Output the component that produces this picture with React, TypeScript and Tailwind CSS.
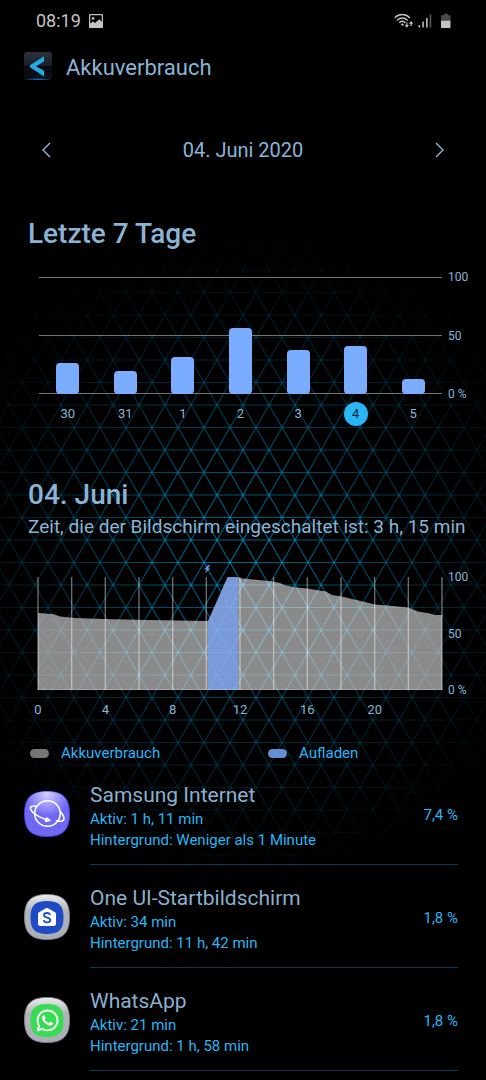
import { type ReactNode, useId } from 'react';
import { FaWhatsapp } from 'react-icons/fa';

const days = [
  { label: '30', level: 31 },
  { label: '31', level: 23 },
  { label: '1', level: 37 },
  { label: '2', level: 66 },
  { label: '3', level: 44 },
  { label: '4', level: 48, selected: true },
  { label: '5', level: 15 },
];

const hours = ['0', '4', '8', '12', '16', '20'];

// Triangular mesh: sides of 26, rows 22.5 apart, first row of nodes at y = -3.
const meshRows = Array.from({ length: 30 }, (_, row) => ({ y: -3 + row * 22.5, x: row % 2 ? 5 : 18 }));
const meshLines = [
  ...meshRows.map(({ y }) => `M0 ${y}H660`),
  ...Array.from({ length: 42 }, (_, i) => {
    const x = 18 + (i - 16) * 26;
    return `M${x} -3l390 675M${x + 390} -3l-390 675`;
  }),
].join('');
const meshNodes = meshRows.flatMap(({ x, y }) =>
  Array.from({ length: 26 }, (_, i) => ({ x: x + i * 26, y })),
);

function Backdrop() {
  return (
    <svg
      className="pointer-events-none absolute top-[228px] left-1/2 h-[660px] w-[660px] -translate-x-1/2"
      viewBox="0 0 660 660"
      aria-hidden="true"
    >
      <defs>
        <radialGradient id="glow" gradientUnits="userSpaceOnUse" cx="330" cy="330" r="330">
          <stop offset="0" stopColor="#fff" stopOpacity="0.9" />
          <stop offset="0.3" stopColor="#fff" stopOpacity="0.68" />
          <stop offset="0.6" stopColor="#fff" stopOpacity="0.36" />
          <stop offset="0.8" stopColor="#fff" stopOpacity="0.15" />
          <stop offset="1" stopColor="#fff" stopOpacity="0" />
        </radialGradient>
        <mask id="fade">
          <rect width="660" height="660" fill="url(#glow)" />
        </mask>
      </defs>
      <g mask="url(#fade)">
        <path d={meshLines} fill="none" stroke="#006e98" strokeWidth="1.2" />
        {meshNodes.map(({ x, y }) => (
          <circle key={`${x}-${y}`} cx={x} cy={y} r="1.4" fill="#008fc0" />
        ))}
      </g>
    </svg>
  );
}

function StatusBar() {
  return (
    <div className="flex h-10 items-center justify-between pt-px pr-[35px] pl-9 text-[#c4c4c4]">
      <div className="flex items-center gap-2">
        <span className="text-[18px] leading-6">08:19</span>
        <svg width="14" height="14" viewBox="0 0 14 14" aria-hidden="true">
          <path
            fillRule="evenodd"
            fill="currentColor"
            d="M1 0H13Q14 0 14 1V13Q14 14 13 14H1Q0 14 0 13V1Q0 0 1 0ZM1.2 1.2V9.6L4 7.4L6 9L10.4 5.2L12.8 8V1.2ZM4 3A1.4 1.4 0 1 1 4 5.8A1.4 1.4 0 1 1 4 3Z"
          />
        </svg>
      </div>
      <svg width="57" height="16" viewBox="0 0 57 16" aria-hidden="true">
        <g fill="none" stroke="currentColor" strokeWidth="1.4" strokeLinecap="round">
          <path d="M1.2 4.4A10 10 0 0 1 15.4 4.4" />
          <path d="M3.4 7A7 7 0 0 1 13.2 7" />
          <path d="M5.7 9.4A4 4 0 0 1 10.9 9.4" />
        </g>
        <circle cx="8.4" cy="11.6" r="1.2" fill="currentColor" />
        <path
          fill="currentColor"
          d="M12.2 9.5H13.4V12H14.9L12.8 14.7L10.7 12H12.2ZM16.5 13V10.7H15L17.1 8L19.2 10.7H17.7V13Z"
        />
        <path fill="currentColor" d="M24.5 12H26V14.5H24.5ZM28.3 8.5H29.8V14.5H28.3ZM32.1 5H33.6V14.5H32.1Z" />
        <path fill="#5c5c5c" d="M35.7 1.5H37.2V14.5H35.7Z" />
        <path fill="#4a4a4a" d="M50 0.8H54V2.2H56.5V8H47V2.2H50Z" />
        <path fill="currentColor" d="M47 7.7H56.5V14Q56.5 15 55.5 15H48Q47 15 47 14Z" />
      </svg>
    </div>
  );
}

function Header() {
  return (
    <header className="flex h-[54px] items-start gap-[14px] pt-3 pl-6">
      <button type="button" aria-label="Zurück" className="block">
        <svg width="28" height="28" viewBox="0 0 28 28" aria-hidden="true">
          <defs>
            <linearGradient id="back-bg" x2="0" y2="1">
              <stop offset="0" stopColor="#2c343f" />
              <stop offset="0.5" stopColor="#181d24" />
              <stop offset="0.51" stopColor="#07090c" />
              <stop offset="1" stopColor="#0b121c" />
            </linearGradient>
            <radialGradient id="back-glow" cx="0.5" cy="1" r="0.5" gradientTransform="translate(0 .85) scale(1 .15)">
              <stop offset="0" stopColor="#1480e0" />
              <stop offset="1" stopColor="#1480e0" stopOpacity="0" />
            </radialGradient>
          </defs>
          <rect width="28" height="28" rx="3" fill="url(#back-bg)" />
          <rect width="28" height="28" rx="3" fill="url(#back-glow)" />
          <path d="M20 4.2V9.4L12 14.2L20 18.8V24.4L6 15.2V13.2Z" fill="#27a8e6" />
        </svg>
      </button>
      <h1 className="pt-0.5 text-[22px] leading-7">Akkuverbrauch</h1>
    </header>
  );
}

function Chevron({ d }: { d: string }) {
  return (
    <svg width="10" height="16" viewBox="0 0 10 16" fill="none" stroke="#8cc0e8" strokeWidth="1.3" aria-hidden="true">
      <path d={d} />
    </svg>
  );
}

function DateSwitcher() {
  return (
    <nav className="flex h-28 items-center justify-between px-[42px]">
      <button type="button" aria-label="Vorheriger Tag">
        <Chevron d="M8 1L1 8L8 15" />
      </button>
      <span className="text-[20px] leading-7">04. Juni 2020</span>
      <button type="button" aria-label="Nächster Tag">
        <Chevron d="M2 1L9 8L2 15" />
      </button>
    </nav>
  );
}

function Scale() {
  return (
    <div className="-my-2 flex w-11 flex-col justify-between pl-1.5 text-[12px] leading-4">
      <span>100</span>
      <span>50</span>
      <span>0 %</span>
    </div>
  );
}

function WeekChart() {
  return (
    <section>
      <h2 className="pl-7 text-[28px] leading-9 font-medium">Letzte 7 Tage</h2>
      <div className="mt-[25px] flex h-[117px] pl-[39px]">
        <div className="relative flex-1">
          <div className="absolute inset-0 flex flex-col justify-between">
            <i className="h-px bg-[#747474]" />
            <i className="h-px bg-[#747474]" />
            <i className="h-px bg-[#747474]" />
          </div>
          <div className="relative flex h-full items-end">
            {days.map((day) => (
              <div key={day.label} className="flex flex-1 justify-center">
                <div className="w-[23px] rounded bg-[#7aacff]" style={{ height: day.level }} />
              </div>
            ))}
          </div>
        </div>
        <Scale />
      </div>
      <div className="mt-2 mr-11 ml-[39px] flex">
        {days.map((day) => (
          <div key={day.label} className="flex flex-1 justify-center">
            <button
              type="button"
              className={
                day.selected
                  ? 'h-6 w-6 rounded-full bg-[#29b6f6] text-[13px] leading-6 text-[#0b2233]'
                  : 'h-6 w-6 text-[13px] leading-6'
              }
            >
              {day.label}
            </button>
          </div>
        ))}
      </div>
    </section>
  );
}

function DayChart() {
  const gridLines = Array.from({ length: 13 }, (_, i) => (i * 404) / 12);
  return (
    <section className="mt-[51px]">
      <h2 className="pl-7 text-[28px] leading-9 font-medium">04. Juni</h2>
      <p className="pl-7 text-[19px] leading-7 whitespace-nowrap">
        Zeit, die der Bildschirm eingeschaltet ist: 3 h, 15 min
      </p>
      <div className="mt-9 flex h-[113px] pl-[38px]">
        <div className="min-w-0 flex-1">
          <svg
            className="block h-full w-full overflow-visible"
            viewBox="0 0 404 113"
            preserveAspectRatio="none"
            role="img"
            aria-label="Akkustand im Tagesverlauf"
          >
            <path
              d="M0 36L15 37L22 39.5L37 41L66 42L110 43L170 44V113H0Z"
              fill="#fff"
              fillOpacity="0.54"
            />
            <path d="M170 44L189.500 0H200V113H170Z" fill="#8eb3fa" fillOpacity="0.86" />
            <path
              d="M200 1L235 4.500L242 6L246 8L258 10.500L269 11.500L288 14.500L294 18L304 19.500L314 22L327 25L337 27.500L350 28.500L370 30.500L380 34.500L392 36.500L397 38H404V113H200Z"
              fill="#fff"
              fillOpacity="0.54"
            />
            {gridLines.map((x) => (
              <path key={x} d={`M${x} 0V113`} stroke="#fff" strokeOpacity="0.42" strokeWidth="1.4" />
            ))}
            <path d="M0 112.500H404" stroke="#fff" strokeOpacity="0.25" />
            <path d="M170 -12L166 -7.500H168.500L167 -3.500L172.500 -8.500H170L172 -12Z" fill="#5f93f0" />
          </svg>
        </div>
        <Scale />
      </div>
      <div className="mt-[10px] mr-11 ml-[38px] grid grid-cols-6 text-[13px] leading-5">
        {hours.map((hour) => (
          <span key={hour} className="flex w-0 justify-center">
            {hour}
          </span>
        ))}
      </div>
      <div className="mt-6 grid grid-cols-2 gap-x-5 pl-[30px] text-[15px] leading-[18px] text-[#29b6f6]">
        <div className="flex items-center gap-3">
          <i className="h-[9px] w-[19px] rounded-full bg-[#767676]" />
          Akkuverbrauch
        </div>
        <div className="flex items-center gap-3">
          <i className="h-[9px] w-[19px] rounded-full bg-[#648dd4]" />
          Aufladen
        </div>
      </div>
    </section>
  );
}

const squircle = 'M23 0.500C39 0.500 45.500 7 45.500 23S39 45.500 23 45.500S0.500 39 0.500 23S7 0.500 23 0.500Z';

function InternetIcon() {
  return (
    <svg className="block h-[46px] w-[46px]" viewBox="0 0 46 46" aria-hidden="true">
      <defs>
        <radialGradient id="net-shine" cx="0.5" cy="0.05" r="0.5">
          <stop offset="0" stopColor="#d2cfff" />
          <stop offset="1" stopColor="#d2cfff" stopOpacity="0" />
        </radialGradient>
      </defs>
      <path d={squircle} fill="#6f68f4" stroke="#443fd8" strokeWidth="1" />
      <path d={squircle} fill="url(#net-shine)" />
      <g fill="none" stroke="#fff" strokeWidth="1.6" strokeLinecap="round" strokeLinejoin="round">
        <circle cx="23.500" cy="22.500" r="12.800" />
        <path d="M12.500 15.200C8 14.400 5.500 15.600 6.600 18.200C8.200 22 15.500 26.300 23 28.900" />
        <path d="M36 20C39 23.500 41 27 39.500 29C38.500 30.800 35.500 30.500 32.500 29.800" />
      </g>
      <path d="M22.500 26.400L26.500 29.500L21.200 30.800Z" fill="#fff" stroke="#fff" strokeLinejoin="round" />
    </svg>
  );
}

function FramedIcon({ fill, children }: { fill: string; children: ReactNode }) {
  const id = useId();
  return (
    <svg className="block h-[46px] w-[46px]" viewBox="0 0 46 46" aria-hidden="true">
      <defs>
        <linearGradient id={id} x2="0" y2="1">
          <stop offset="0" stopColor="#ececee" />
          <stop offset="0.35" stopColor="#b2b5bb" />
          <stop offset="1" stopColor="#a9adb5" />
        </linearGradient>
      </defs>
      <path d={squircle} fill={`url(#${id})`} stroke="#85888f" strokeWidth="0.800" />
      <path d="M23 7C35 7 39.500 11.500 39.500 23.500S35 40 23 40S6.500 35.500 6.500 23.500S11 7 23 7Z" fill={fill} />
      {children}
    </svg>
  );
}

function HomeIcon() {
  return (
    <FramedIcon fill="#1e4bc4">
      <path
        d="M21.900 14.300Q23 13.500 24.100 14.300L31 18.200Q32 18.800 32 20V29.500Q32 32 29.500 32H16.500Q14 32 14 29.500V20Q14 18.800 15 18.200Z"
        fill="#fff"
      />
      <path
        d="M26.200 20.800C25.600 19.400 24.500 19 23 19C21.200 19 20 19.900 20 21.200C20 24.300 26.300 22.700 26.300 26C26.300 27.500 24.900 28.400 23 28.400C21.200 28.400 20 27.600 19.700 26.100"
        fill="none"
        stroke="#1e4bc4"
        strokeWidth="1.8"
      />
    </FramedIcon>
  );
}

function ChatIcon() {
  return (
    <FramedIcon fill="#37dc52">
      <FaWhatsapp x={11} y={11} size={25} color="#fff" />
    </FramedIcon>
  );
}

const apps = [
  {
    name: 'Samsung Internet',
    active: 'Aktiv: 1 h, 11 min',
    background: 'Hintergrund: Weniger als 1 Minute',
    share: '7,4 %',
    icon: <InternetIcon />,
  },
  {
    name: 'One UI-Startbildschirm',
    active: 'Aktiv: 34 min',
    background: 'Hintergrund: 11 h, 42 min',
    share: '1,8 %',
    icon: <HomeIcon />,
  },
  {
    name: 'WhatsApp',
    active: 'Aktiv: 21 min',
    background: 'Hintergrund: 1 h, 58 min',
    share: '1,8 %',
    icon: <ChatIcon />,
  },
];

function AppList() {
  return (
    <ul className="pr-7 pl-6">
      {apps.map((app) => (
        <li key={app.name} className="flex items-center gap-5">
          {app.icon}
          <div className="flex flex-1 items-center justify-between border-b border-[#0d3b56] pt-[19px] pb-[13px] text-[15px] leading-[21px] text-[#29b6f6]">
            <div>
              <h3 className="text-[21px] leading-7 text-[#8ab0cf]">{app.name}</h3>
              <p>{app.active}</p>
              <p>{app.background}</p>
            </div>
            <span className="pb-0.5">{app.share}</span>
          </div>
        </li>
      ))}
    </ul>
  );
}

export default function App() {
  return (
    <div className="relative min-h-screen overflow-hidden bg-black font-[Roboto,sans-serif] text-[#8ab4d6]">
      <Backdrop />
      <main className="relative">
        <StatusBar />
        <Header />
        <DateSwitcher />
        <div className="pt-[10px]">
          <WeekChart />
          <DayChart />
        </div>
        <AppList />
      </main>
    </div>
  );
}
